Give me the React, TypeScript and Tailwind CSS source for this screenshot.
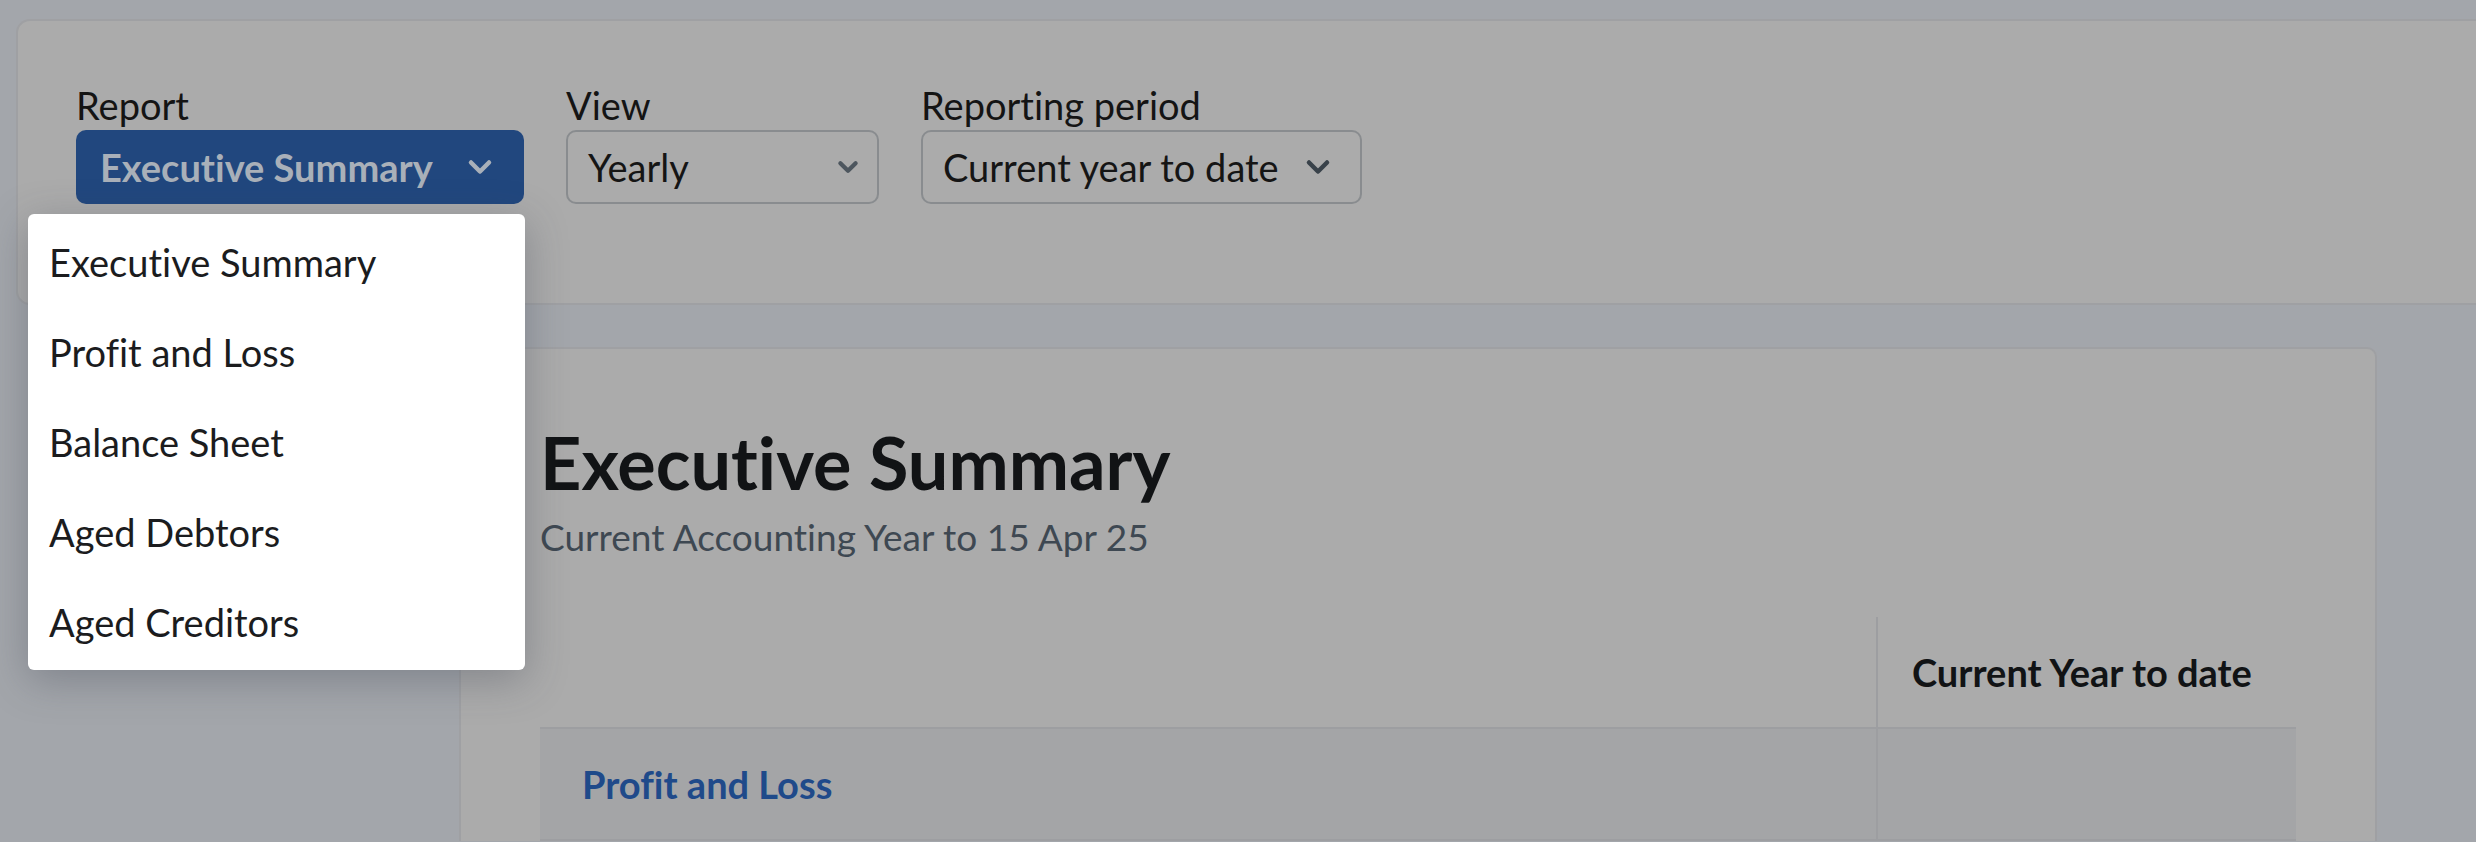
const menuItems = [
  "Executive Summary",
  "Profit and Loss",
  "Balance Sheet",
  "Aged Debtors",
  "Aged Creditors",
];

function Chevron({ className, w = 26, sw = 4.5 }: { className?: string; w?: number; sw?: number }) {
  return (
    <svg
      width={w}
      height={Math.round(w * 0.62)}
      viewBox="0 0 26 16"
      fill="none"
      className={className}
    >
      <polyline
        points="4,3.5 13,12.5 22,3.5"
        stroke="currentColor"
        strokeWidth={sw}
        strokeLinecap="round"
        strokeLinejoin="round"
      />
    </svg>
  );
}

function ReportPicker() {
  return (
    <div className="relative flex flex-col">
      <label className="h-[44px] text-[38px] leading-[44px] text-[#141414]">Report</label>
      <button className="mt-[3px] flex h-[74px] w-[448px] items-center justify-between rounded-[10px] bg-[#21477e] pl-[24px] pr-[31px] text-[38px] font-bold text-[#a9b0b9]">
        <span>Executive Summary</span>
        <Chevron className="text-[#a9b0b9]" />
      </button>
      <ul className="absolute left-[-48px] top-[calc(100%+10px)] z-10 w-[497px] rounded-[6px] bg-white py-[3px] shadow-[0_10px_40px_rgba(60,66,80,0.35)]">
        {menuItems.map((item) => (
          <li
            key={item}
            className="flex h-[90px] items-center pl-[21px] text-[38px] text-[#1b1c1e]"
          >
            {item}
          </li>
        ))}
      </ul>
    </div>
  );
}

function SelectBox({
  label,
  value,
  width,
  chevron,
}: {
  label: string;
  value: string;
  width: string;
  chevron: React.ReactNode;
}) {
  return (
    <div className="flex flex-col">
      <label className="h-[44px] text-[38px] leading-[44px] text-[#141414]">{label}</label>
      <div
        className={`mt-[3px] flex h-[74px] items-center justify-between rounded-[10px] border-2 border-[#898c8f] bg-[#ababab] pl-[20px] text-[38px] text-[#151515] ${width}`}
      >
        <span>{value}</span>
        {chevron}
      </div>
    </div>
  );
}

export default function App() {
  return (
    <div className="h-[842px] w-full overflow-hidden bg-[#a3a6ab] pl-[16px] pt-[19px] font-['Lato',sans-serif] [font-variant-ligatures:no-common-ligatures]">
      <div className="flex gap-[42px] rounded-l-[14px] border-2 border-r-0 border-[#9fa0a3] bg-[#ababab] pb-[99px] pl-[58px] pt-[62px]">
        <ReportPicker />
        <SelectBox
          label="View"
          value="Yearly"
          width="w-[313px] pr-[18px]"
          chevron={<Chevron className="text-[#4d565e]" w={22} sw={5} />}
        />
        <SelectBox
          label="Reporting period"
          value="Current year to date"
          width="w-[441px] pr-[29px]"
          chevron={<Chevron className="text-[#39424a]" />}
        />
      </div>

      <div className="ml-[443px] mt-[42px] w-[1918px] rounded-t-[10px] border-2 border-b-0 border-[#9fa0a3] bg-[#ababab] px-[79px] pt-[77px]">
        <h1 className="text-[72px] font-bold leading-[72px] text-[#111315]">Executive Summary</h1>
        <p className="mt-[21px] text-[37px] leading-[36px] text-[#3e4852]">
          Current Accounting Year to 15 Apr 25
        </p>

        <div className="mt-[62px] w-[1756px]">
          <div className="flex h-[112px] border-b-2 border-[#9d9ea1]">
            <div className="w-[1336px]" />
            <div className="flex w-[420px] items-center border-l-2 border-[#9d9ea1] pl-[34px] text-[38px] font-bold text-[#111315]">
              Current Year to date
            </div>
          </div>
          <div className="flex h-[112px] border-b-2 border-[#9d9ea1] bg-[#a4a5a7]">
            <div className="flex w-[1336px] items-center pl-[42px] text-[38px] font-bold text-[#1f4a8a]">
              Profit and Loss
            </div>
            <div className="w-[420px] border-l-2 border-[#9d9ea1]" />
          </div>
        </div>
      </div>
    </div>
  );
}
